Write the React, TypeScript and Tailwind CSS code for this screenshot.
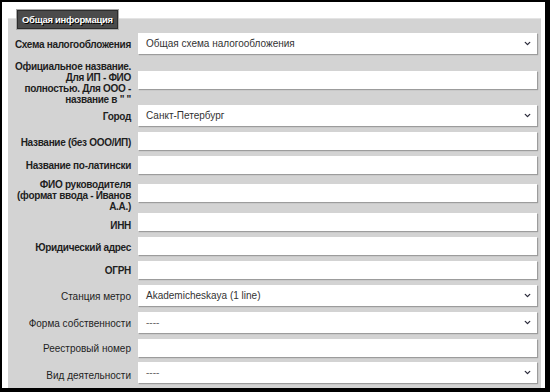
import { ChevronDown } from "lucide-react";

type Row = {
  label: string[];
  bold: boolean;
  kind: "select" | "text";
  value?: string;
  h: string;
  lp?: string;
};

const rows: Row[] = [
  { label: ["Схема налогообложения"], bold: true, kind: "select", value: "Общая схема налогообложения", h: "h-[26px]" },
  {
    label: ["Официальное название.", "Для ИП - ФИО", "полностью. Для ООО -", "название в \" \""],
    bold: true,
    kind: "text",
    h: "h-[47px]",
    lp: "pt-[6px]",
  },
  { label: ["Город"], bold: true, kind: "select", value: "Санкт-Петербург", h: "h-[25px]" },
  { label: ["Название (без ООО/ИП)"], bold: true, kind: "text", h: "h-[26px]" },
  { label: ["Название по-латински"], bold: true, kind: "text", h: "h-[21px]" },
  {
    label: ["ФИО руководителя", "(формат ввода - Иванов", "А.А.)"],
    bold: true,
    kind: "text",
    h: "h-[35px]",
    lp: "pt-[5px]",
  },
  { label: ["ИНН"], bold: true, kind: "text", h: "h-[24px]", lp: "pt-[6px]" },
  { label: ["Юридический адрес"], bold: true, kind: "text", h: "h-[24px]" },
  { label: ["ОГРН"], bold: true, kind: "text", h: "h-[23px]" },
  { label: ["Станция метро"], bold: false, kind: "select", value: "Akademicheskaya (1 line)", h: "h-[28px]" },
  { label: ["Форма собственности"], bold: false, kind: "select", value: "----", h: "h-[27px]" },
  { label: ["Реестровый номер"], bold: false, kind: "text", h: "h-[23px]" },
  { label: ["Вид деятельности"], bold: false, kind: "select", value: "----", h: "h-[27px]", lp: "pt-[5px]" },
];

function Field({ row }: { row: Row }) {
  if (row.kind === "select") {
    return (
      <div className="flex h-[21px] items-center justify-between bg-white pl-[8px] pr-[5px] text-[10px] text-[#333] shadow-[1px_1px_1px_#9c9c9c]">
        <span className={row.value === "----" ? "text-[#666]" : ""}>{row.value}</span>
        <ChevronDown className="h-[9px] w-[9px] text-[#2b2b3b]" strokeWidth={3.5} />
      </div>
    );
  }
  return <div className="h-[18px] bg-white shadow-[1px_1px_1px_#9c9c9c]" />;
}

export default function App() {
  return (
    <div className="h-[392px] w-[550px] bg-black pb-[4px] pl-[2px] pr-[5px] pt-[2px] font-['Liberation_Sans',Arial,sans-serif]">
      <div className="h-full bg-white pl-[6px] pr-[4px] pt-[16px]">
        <div className="relative h-full border-t border-[#e4e4e4] bg-[#d3d3d3] pr-[4px] pt-[11px]">
          <div className="absolute left-[8px] top-[-10px] border border-[#a8a8a8] bg-[#4b4b4b] px-[5px] py-[4px] text-[9.5px] font-bold leading-[11px] tracking-[-0.3px] text-white shadow-[inset_0_0_0_1px_#2c2c2c] [text-shadow:1px_1px_0_#000]">
            Общая информация
          </div>
          {rows.map((row, i) => (
            <div key={i} className={`flex items-center ${row.h}`}>
              <div
                className={`w-[123px] shrink-0 whitespace-nowrap text-right text-[10px] leading-[11px] text-[#1e1e1e] ${
                  row.bold ? "font-bold tracking-[-0.3px]" : ""
                } ${row.lp ?? "pt-[2px]"}`}
              >
                {row.label.map((l, j) => (
                  <div key={j}>{l}</div>
                ))}
              </div>
              <div className="ml-[7px] flex-1">
                <Field row={row} />
              </div>
            </div>
          ))}
        </div>
      </div>
    </div>
  );
}
